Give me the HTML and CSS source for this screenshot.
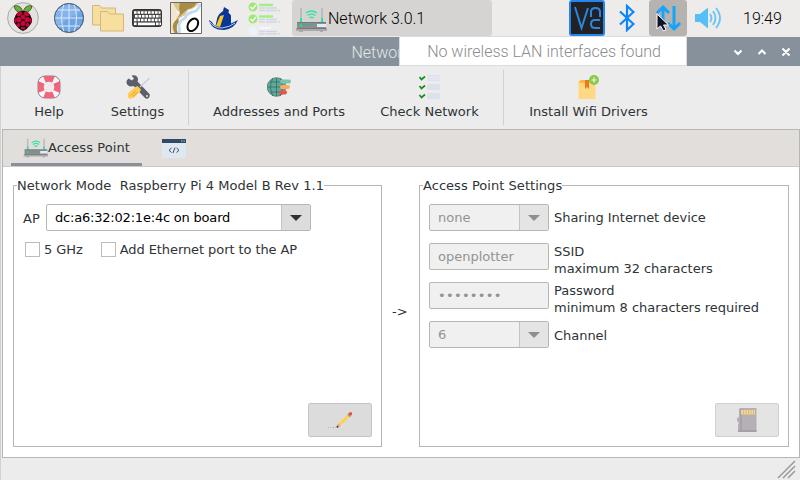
FILE: index.html
```html
<!DOCTYPE html>
<html lang="en">
<head>
<meta charset="utf-8">
<title>Network</title>
<link rel="stylesheet" href="styles.css">
</head>
<body>
<svg class="defs" aria-hidden="true">
  <symbol id="router" viewBox="0 0 32 32">
    <path d="M5 6h2v15H5zM26 6h2v15h-2z" fill="#bcbcbc"/>
    <path d="M5 16h2v4H5zM26 16h2v4h-2z" fill="#27e3a0"/>
    <path d="M11 11q5.500-4 11 0M12.500 13.500q4-3 8 0M14.500 16q2-1.500 4 0" fill="none" stroke="#34e3a3" stroke-width="1.500"/>
    <path d="M2 20h29v7H2z" fill="#8e8e90"/>
    <path d="M1 26h31v3h-4v1h-3v-1H8v1H4v-1H1z" fill="#a9a9a9"/>
    <path d="M2 20h29v1H2zM2 26h29v1H2z" fill="#77777a"/>
    <path d="M8 23h10" stroke="#35ae8b" stroke-width="1.500" stroke-dasharray="2 1"/>
    <circle cx="6" cy="23.500" r="1.200" fill="#28d79a"/>
    <path d="M22 22h9v3h-9z" fill="#dcecff"/>
  </symbol>
</svg>
<header class="panel">
  <svg class="ic pi" viewBox="0 0 32 32">
    <circle cx="16" cy="16" r="15.400" fill="#e2e2e2" stroke="#aaa"/>
    <path d="M15.500 9C14 4 10 3 7 4q1 6 7 6.500zM16.500 9C18 4 22 3 25 4q-1 6-7 6.500z" fill="#6fae3c" stroke="#2c5014" stroke-width=".8"/>
    <path d="M16 9c4 0 7 2 8 6 2 3 1 6-1 8-2 3-4 5-7 6-3-1-5-3-7-6-2-2-3-5-1-8 1-4 4-6 8-6z" fill="#1d0509"/>
    <g fill="#c7053d"><ellipse cx="12.500" cy="12" rx="3" ry="1.900" transform="rotate(-25 12.500 12)"/><ellipse cx="19.500" cy="12" rx="3" ry="1.900" transform="rotate(25 19.500 12)"/><circle cx="16" cy="15" r="2.300"/><circle cx="11.800" cy="17.700" r="2.700"/><circle cx="20.200" cy="17.700" r="2.700"/><circle cx="16" cy="21.500" r="2.500"/><ellipse cx="8.300" cy="18.500" rx="1" ry="2.600"/><ellipse cx="23.700" cy="18.500" rx="1" ry="2.600"/><circle cx="11.300" cy="23" r="1.900"/><circle cx="20.700" cy="23" r="1.900"/><ellipse cx="16" cy="26.300" rx="2.400" ry="1.300"/></g>
  </svg>
  <svg class="ic globe" viewBox="0 0 32 32">
    <circle cx="16" cy="16" r="14.500" fill="#6ea4e4" stroke="#4f6a8d"/>
    <path d="M4 24A14 14 0 0 1 28 9z" fill="#85b3ea"/>
    <path d="M2 16h28M16 2v28M5 8h22M5 24h22M11 2q-5 14 0 28M21 2q5 14 0 28" fill="none" stroke="#dce9fa" stroke-width="1"/>
    <circle cx="16" cy="16" r="14.500" fill="none" stroke="#546a86"/>
  </svg>
  <svg class="ic folders" viewBox="0 0 32 32">
    <g stroke="#d5b67c" stroke-width="1"><path d="M.5 3.500h7l2 2.500h14v17H.5z" fill="#f6dda0"/><path d="M8.500 9.500h7l2 2.500h14v17H8.500z" fill="#f7e09e"/></g>
  </svg>
  <svg class="ic keys" viewBox="0 0 32 32">
    <rect x="1.500" y="7.500" width="29" height="17" rx="2" fill="#444" stroke="#333"/>
    <g stroke="#fff" stroke-width="2.500" stroke-dasharray="2.600 .9"><path d="M3 10.500h26.500M4 14.200h25.500M3 17.900h26.500M3 21.800h3"/><path d="M25 21.800h5"/></g>
    <path d="M7 20.600h17v2.600H7z" fill="#fff"/>
  </svg>
  <svg class="ic chart" viewBox="0 0 32 32">
    <path d="M0 0h32v32H0z" fill="#fff"/>
    <path d="M0 0h10Q6 4 7 10l3 3-4 4q-4 3-3 8l1 7H0z" fill="#f2e6d2"/>
    <path d="M3 0h26q-2 5-7 7l-4 1-3 5-5 3-4 6 1 9H4q-4-7 1-12 5-4 5-8-5-4-7-11z" fill="#d8c68f"/>
    <path d="M10 0h17q-3 6-9 7-5 4-8 7l-4 3q6-6 3-10z" fill="#a98b43"/>
    <path d="M8 16q-5 4-5 8 0 4 2 7h3q-3-6 1-11z" fill="#a98b43"/>
    <path d="M30 2q-2 8-8 8-6 2-7 6-7 4-6 9 1 3 0 6" fill="none" stroke="#c2daf4" stroke-width="3"/>
    <ellipse cx="22.800" cy="22.800" rx="4.700" ry="6.800" transform="rotate(32 22.800 22.800)" fill="none" stroke="#090909" stroke-width="2"/>
    <path d="M.5.500h31v31H.5z" fill="none" stroke="#6a6965"/>
  </svg>
  <svg class="ic boat" viewBox="0 0 32 32">
    <path d="M16 5l5 3-.5 2.500 2.500 3V23l-5 3H7l2-9q1-5 6-8z" fill="#0a3696"/>
    <path d="M12 14l4-1-4 12-4-1z" fill="#fcc91a"/>
    <path d="M1 18q4 2 5 5 4 4 10 2 8-4 14-7-4 9-14 10Q3 28 1 18z" fill="#0738a0"/>
    <path d="M2 20q4 6 12 6 8-1 13-5" fill="none" stroke="#f1f3f9" stroke-width=".8"/>
  </svg>
  <svg class="ic tasks" viewBox="0 0 32 34">
    <circle cx="5" cy="6" r="4.500" fill="#9ee879"/><circle cx="5" cy="18" r="4.500" fill="#9ee879"/><circle cx="5" cy="30" r="4.500" fill="#edf1fb"/>
    <path d="M2.500 6l2 2 3.500-4M2.500 18l2 2 3.500-4" fill="none" stroke="#fff" stroke-width="1.300"/>
    <path d="M11 4h14M11 15.500h14" stroke="#a7ee82" stroke-width="2.300"/>
    <path d="M11 27h12" stroke="#f6f7fb" stroke-width="2"/>
    <path d="M11 7h19M11 9.500h21M11 18.500h19M11 21h21M11 30.500h19M11 33h21" stroke="#cfd4e6" stroke-width="1.500" stroke-dasharray="6 1 11 1"/>
  </svg>
  <div class="task"><svg class="ic"><use href="#router"/></svg><span>Network 3.0.1</span></div>
  <div class="tray">
    <svg class="vnc" viewBox="0 0 36 36"><rect x="1" y="1" width="34" height="34" rx="2" fill="#202226" stroke="#2386ee" stroke-width="2"/>
      <path d="M6 7l6.500 21L19 8M22 17v-5q0-4 4.500-4t4.500 4v5M31 20h-5q-4 0-4 4t4 4h5" fill="none" stroke="#2b87dd" stroke-width="2"/></svg>
    <svg class="bt" viewBox="0 0 16 28"><path d="M1 7.500L14.500 20 8 26V2l6.500 6L1 20.500" fill="none" stroke="#0a84ff" stroke-width="2.200"/></svg>
    <div class="net"><svg viewBox="0 0 38 36"><path d="M14 30V8M8 13l6-6 6 6M25 6v22M19 23l6 6 6-6" fill="none" stroke="#14a5fa" stroke-width="3"/>
      <path d="M8 14v15l3.500-3 3 5 2.500-1.500-2.500-4.500h5z" fill="#10122a" stroke="#fff" stroke-width="1"/></svg></div>
    <svg class="vol" viewBox="0 0 27 22"><path d="M0 7h5l8-6.500v21L5 15H0z" fill="#56bff9"/><path d="M15 7q3 4 0 8M18 4q5 7 0 14M21 1q8 10 0 20" fill="none" stroke="#6bc5f5" stroke-width="1.900"/></svg>
    <span class="clock">19:49</span>
  </div>
</header>
<div class="title"><span>Network 3.0.1</span>
  <svg class="wm" viewBox="0 0 60 16"><g fill="none" stroke="#fff" stroke-width="2"><path d="M2.500 6.500L6 10l3.500-3.500M26.500 10L30 6.500l3.500 3.500M50.500 4.500l7 7M57.500 4.500l-7 7"/></g></svg>
  <div class="tip">No wireless LAN interfaces found</div>
</div>
<main class="window">
  <nav class="tools">
    <a class="tool help"><svg viewBox="0 0 24 24"><rect x="1" y="1" width="22" height="22" rx="7" fill="#f7f7fa" stroke="#7f8590" stroke-width="1"/><path d="M6 1h12l-3 7H9zM6 23h12l-3-7H9zM1 6l7 3v6l-7 3zM23 6l-7 3v6l7 3z" fill="#f0647c"/><circle cx="12" cy="12" r="4.800" fill="#ececec" stroke="#f4f4f7"/></svg><span>Help</span></a>
    <a class="tool settings"><svg viewBox="0 0 24 24"><path d="M2.500 3.500L6 5.500 8 3.500 5.500.500q5-1.500 6.500 3 0 2-.5 3L23.500 19q1 3-1.500 4.500-2 .5-3-.5L7.500 11Q2 12.500.500 8q-.5-2.500 2-4.500z" fill="#5c5e6c"/><path d="M23.500 3L14 12" stroke="#c9cddd" stroke-width="1.300"/><path d="M11.500 11l3.500 3.500-1 2-6 6q-3 2-5.500.5-2-2.500.5-5.500l6-5.500z" fill="#ffcd4e"/><path d="M9.500 16L5 20.500M11.500 17.500L7 21.500" stroke="#ef9a38"/><circle cx="21" cy="21" r="1" fill="#e8e8e8"/></svg><span>Settings</span></a>
    <i class="sep"></i>
    <a class="tool addr"><svg viewBox="0 0 24 24"><circle cx="9.500" cy="12" r="9.300" fill="#62aa9d" stroke="#457e77" stroke-width=".8"/><path d="M0 12h17M9.500 3v18M3 7h13M3 17h13M6 3q-5 9 0 18M13 3q5 9 0 18" fill="none" stroke="#397269" stroke-width=".9"/><g stroke-width="4" stroke-linecap="round"><path d="M15 6.500h7" stroke="#79c4aa"/><path d="M15 12h6" stroke="#ffa85a"/><path d="M14 17.500h4" stroke="#f0504b"/></g></svg><span>Addresses and Ports</span></a>
    <a class="tool check"><svg viewBox="0 0 24 24"><path d="M9 0h13v6H9zM9 9h13v6H9zM9 18h13v6H9z" fill="#dce1eb"/><path d="M9 2h13M9 4h13" stroke="#eef0f4" stroke-width=".7"/><path d="M1.500 2l2 2.500L7 1.500M1.500 11l2 2.500L7 10.500M1.500 20l2 2.500L7 19.500" fill="none" stroke="#139019" stroke-width="1.700"/></svg><span>Check Network</span></a>
    <i class="sep"></i>
    <a class="tool wifi"><svg viewBox="0 0 24 24"><path d="M1.500 7l2-2h13l2 2v17h-17z" fill="#ffd884"/><path d="M1.500 8l2-3h13l2 3z" fill="#ffb83f"/><path d="M8 5h4v9l-2-2-2 2z" fill="#e87a20"/><circle cx="17" cy="5" r="5" fill="#8aca4b"/><path d="M17 2.500v5M14.500 5h5" stroke="#effbe5" stroke-width="1.200"/></svg><span>Install Wifi Drivers</span></a>
  </nav>
  <section class="book">
    <div class="tabs">
      <div class="tab"><svg viewBox="0 5 32 26" preserveAspectRatio="none"><use href="#router" width="32" height="32"/></svg><span>Access Point</span></div>
      <svg class="code" viewBox="0 0 24 19"><path d="M0 0h24v19H0z" fill="#dfe7f1"/><path d="M0 0h24v4H0z" fill="#2f4c66"/><path d="M19 2h4" stroke="#b7c8d8" stroke-dasharray="1 .6"/><path d="M9.500 9L7 11.300l2.500 2.200M14.500 9l2.500 2.300-2.500 2.200M13 8.500l-2 5.500" fill="none" stroke="#35506a" stroke-width="1"/></svg>
    </div>
    <div class="page">
      <fieldset class="mode"><legend>Network Mode&nbsp; Raspberry Pi 4 Model B Rev 1.1</legend>
        <div class="aprow"><span>AP</span><div class="combo"><b>dc:a6:32:02:1e:4c on board</b><i></i></div></div>
        <div class="checks"><label><i></i>5 GHz</label><label><i></i>Add Ethernet port to the AP</label></div>
        <div class="btn"><svg viewBox="0 0 26 26"><path d="M1 20.500h8" stroke="#df9ba0" stroke-dasharray="1 1.500"/><path d="M12 18L22 8.500" stroke="#ffd347" stroke-width="3"/><path d="M12.500 17.500L11 19" stroke="#f6a0a0" stroke-width="3"/><circle cx="10.500" cy="19.800" r="1" fill="#333"/><path d="M21.500 9L23 7.500" stroke="#999" stroke-width="3.500"/><circle cx="23.500" cy="6.800" r="1.700" fill="#f04a43"/></svg></div>
      </fieldset>
      <span class="arrow">-&gt;</span>
      <fieldset class="conf"><legend>Access Point Settings</legend>
        <div class="row"><div class="combo off"><b>none</b><i></i></div><span>Sharing Internet device</span></div>
        <div class="row"><div class="combo off"><b>openplotter</b></div><span class="two">SSID<br>maximum 32 characters</span></div>
        <div class="row"><div class="combo off"><b class="dots">••••••••</b></div><span class="two">Password<br>minimum 8 characters required</span></div>
        <div class="row"><div class="combo off"><b>6</b><i></i></div><span class="low">Channel</span></div>
        <div class="btn off"><svg viewBox="0 0 26 26"><path d="M6 1h16.500v24H4v-8l1-1-2-2v-3l2-1V2z" fill="#b5afb6"/><path d="M6 2h2v22H6z" fill="#a8a1aa"/><path d="M4 23h18.500v2H4z" fill="#a69fa8"/><path d="M7 3h14v4.500H7z" fill="#efd694"/><path d="M9.500 3v5M12 3v5M14.500 3v5M17 3v5M19.500 3v5" stroke="#d6b879" stroke-width=".8"/></svg></div>
      </fieldset>
    </div>
  </section>
  <footer class="status"><svg viewBox="0 0 20 20"><path d="M1 18L18 1M6 18L18 6M11 18l7-7" stroke="#9a9a9a" stroke-width="1.500"/></svg></footer>
</main>
</body>
</html>
```
FILE: styles.css
```css
* { box-sizing: border-box; }
body { margin: 0; width: 800px; height: 480px; overflow: hidden; background: #ececec; color: #2e3436; font: 13px/17px "DejaVu Sans", sans-serif; }
svg { display: block; flex: none; }
.defs { position: absolute; width: 0; height: 0; }
.panel { display: flex; align-items: center; height: 37px; padding: 0 18px 1px 7px; background: #edecea; font: 300 16px/20px Roboto, sans-serif; color: #000; }
.ic { width: 32px; height: 32px; }
.globe { margin-left: 14px; }
.folders { margin-left: 7px; }
.keys { margin-left: 7px; }
.chart { margin-left: 7px; }
.boat { margin-left: 6px; }
.tasks { margin-left: 8px; height: 34px; }
.task { display: flex; align-items: center; width: 200px; height: 36px; margin-left: 12px; padding-left: 3px; border-radius: 3px; background: #d6d4d2; }
.task span { padding: 2px 0 0 1px; }
.tray { display: flex; align-items: center; margin-left: auto; }
.vnc { width: 36px; height: 36px; }
.bt { width: 16px; height: 28px; margin: 0 14px; }
.net { width: 38px; height: 36px; background: #b6b2af; border-radius: 3px; }
.vol { width: 27px; height: 22px; margin-left: 8px; }
.clock { width: 39px; margin-left: 21px; padding-top: 2px; white-space: nowrap; }
.title { position: relative; display: flex; align-items: center; justify-content: center; height: 29px; padding-top: 2px; background: #87919b; color: #e4e7ea; font: 300 16px/20px Roboto, sans-serif; }
.wm { position: absolute; right: 8px; top: 7px; width: 60px; height: 16px; }
.tip { position: absolute; left: 399px; top: -1px; width: 288px; height: 30px; padding: 5px 0 0 2px; border: 1px solid #dcdcdc; background: #fff; color: #8a8c8c; text-align: center; white-space: nowrap; }
.window { height: 414px; display: flex; flex-direction: column; border-left: 1px solid #d0d0d0; }
.tools { display: flex; height: 63px; padding-left: 1px; }
.tool { display: flex; flex-direction: column; align-items: center; padding-top: 9px; white-space: nowrap; }
.tool svg { width: 24px; height: 24px; margin-bottom: 4px; }
.help { width: 94px; }
.settings { width: 83px; }
.tools .sep { margin-left: 9px; }
.sep { width: 1px; height: 55px; margin-top: 4px; background: #d0d0d0; }
.sep + .addr { width: 180px; }
.check { width: 121px; }
.tools .check + .sep { margin-left: 13px; }
.wifi { width: 169px; }
.book { height: 329px; margin: 0 0 0 1px; border: 1px solid #b6b6b3; background: #fff; }
.tabs { display: flex; height: 37px; padding-left: 8px; border-bottom: 1px solid #cec8c0; background: #e1dedb; }
.tab { display: flex; width: 131px; height: 36px; padding: 2px 0 0 12px; align-items: center; border-bottom: 3px solid #87919b; letter-spacing: .08px; white-space: nowrap; }
.tab svg { width: 25px; height: 20px; }
.code { width: 24px; height: 19px; margin: 9px 0 0 20px; }
.page { display: flex; height: 290px; padding: 10px; }
fieldset { position: relative; min-width: 0; height: 270px; margin: 0; padding: 0; border: 1px solid #b6b6b3; }
legend { height: 17px; padding: 0; margin-left: 3px; letter-spacing: .04px; white-space: nowrap; }
.mode { width: 369px; }
.conf { width: 370px; }
.arrow { width: 37px; padding: 126px 0 0 10px; }
.aprow { display: flex; align-items: center; padding: 10px 0 0 9px; height: 37px; }
.aprow span { width: 23px; padding-top: 2px; }
.combo { display: flex; width: 265px; height: 27px; border: 1px solid #b6b6b3; border-radius: 2px; background: #fff; color: #000; }
.combo b { flex: 1; padding: 4px 8px; font-weight: 400; letter-spacing: -.2px; white-space: nowrap; }
.combo i { width: 29px; border-left: 1px solid #c4c4c4; background: #dcdcdc; display: flex; align-items: center; justify-content: center; }
.combo i::after { content: ""; border: 6px solid transparent; border-top-color: #2e3436; border-bottom: 0; }
.combo.off b { letter-spacing: 0; }
.combo.off .dots { letter-spacing: .3px; }
.combo.off { width: 120px; background: #f0f0f0; color: #919494; }
.off i { background: #e4e4e4; }
.combo.off i::after { border-top-color: #8d8f8f; }
.checks { display: flex; padding: 10px 0 0 11px; gap: 18px; letter-spacing: -.08px; }
.checks label { display: flex; align-items: center; gap: 4px; white-space: nowrap; }
.checks i { width: 15px; height: 15px; border: 1px solid #bcbcbc; background: #fff; }
.row { display: flex; height: 39px; padding: 10px 0 0 9px; }
.row > span { padding: 5px 0 0 5px; letter-spacing: -.03px; white-space: nowrap; }
.row > .two { padding-top: 0; }
.row > .low { padding-top: 6px; }
.btn { position: absolute; right: 9px; bottom: 9px; width: 64px; height: 34px; border: 1px solid #c4c4c4; border-radius: 2px; background: #dcdcdc; display: flex; align-items: center; justify-content: center; }
.btn.off { background: #e4e4e4; border-color: #d0d0d0; }
.btn svg { width: 26px; height: 26px; }
.status { display: flex; justify-content: flex-end; padding: 2px 3px 0 0; height: 22px; }
.status svg { width: 20px; height: 20px; }
```
